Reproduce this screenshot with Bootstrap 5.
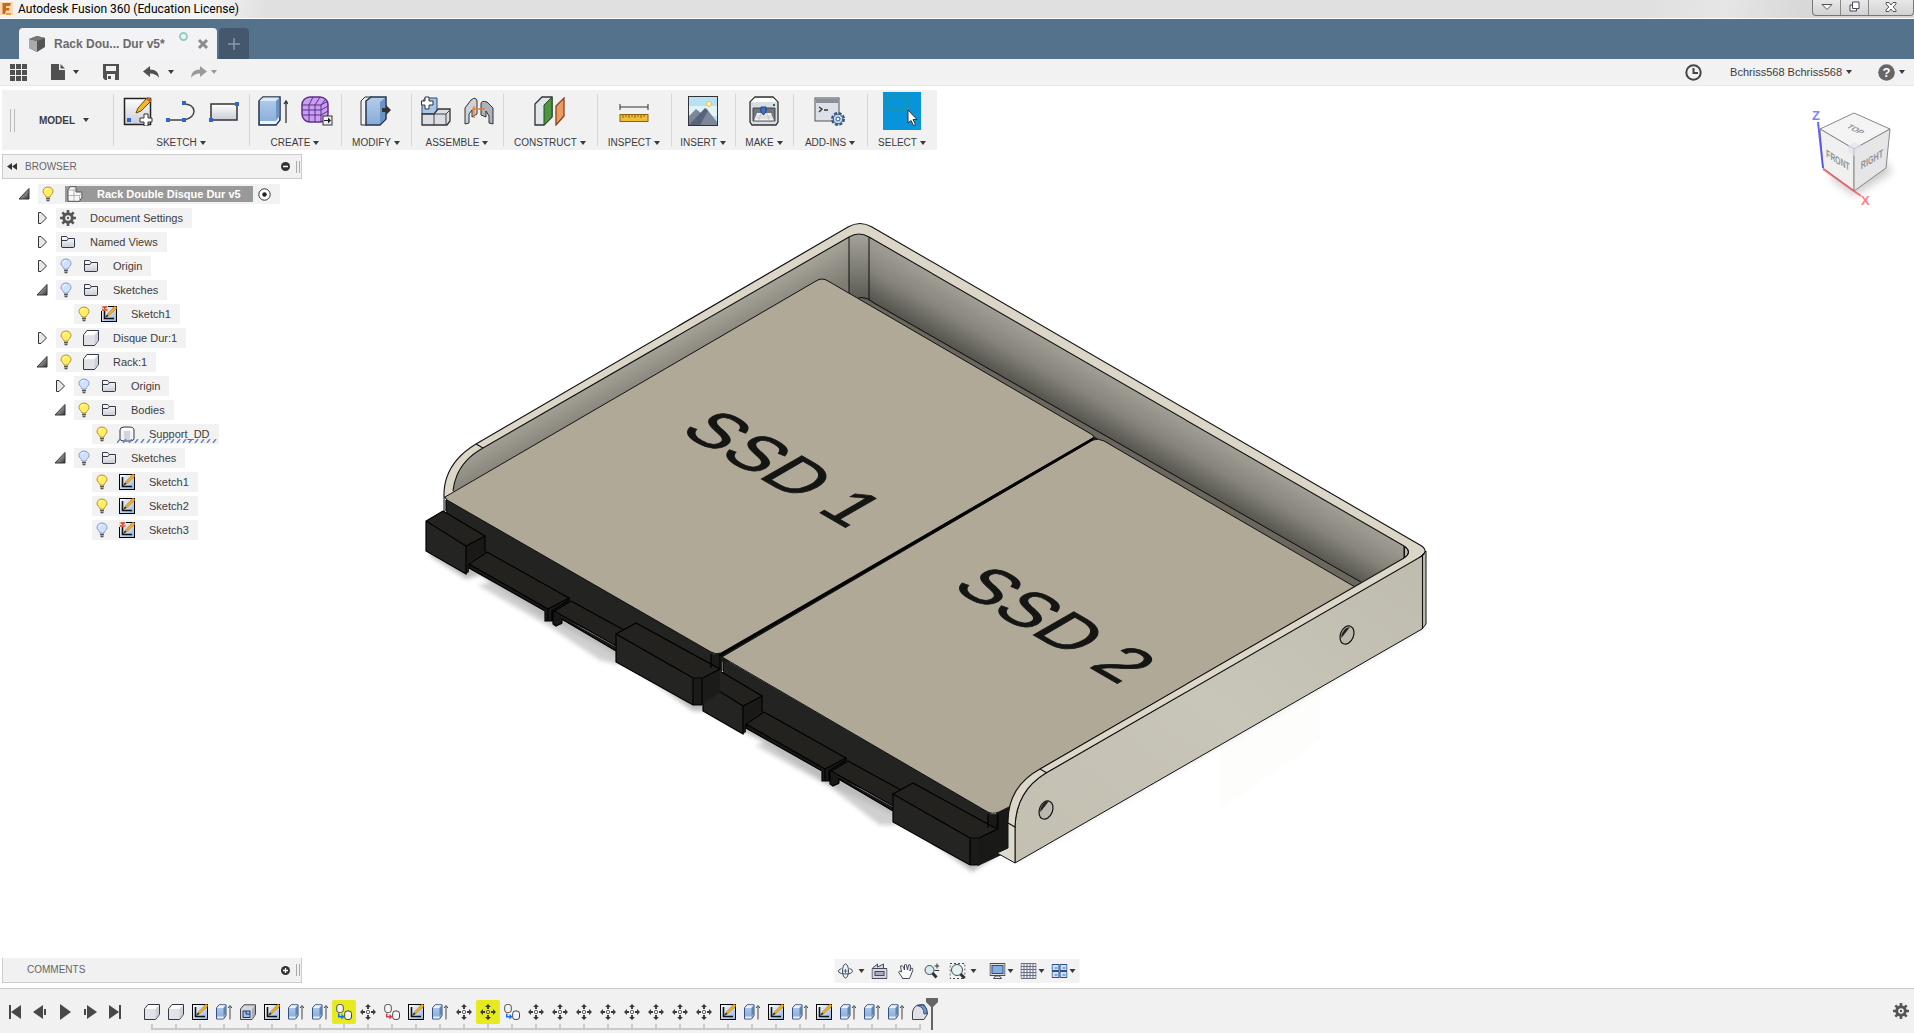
<!DOCTYPE html>
<html lang="en">
<head>
<meta charset="utf-8">
<meta name="viewport" content="width=device-width, initial-scale=1">
<title>Autodesk Fusion 360 (Education License)</title>
<link href="https://cdn.jsdelivr.net/npm/bootstrap@5.3.0/dist/css/bootstrap.min.css" rel="stylesheet">
<style>
body{font:11px/16px "Liberation Sans",Arial,sans-serif;color:#3c3c3c;background:#fff}
svg{display:block;flex:none}
button{border:0;background:none;padding:0;color:inherit;font:inherit;display:flex;align-items:center;justify-content:center}
.titlebar{height:19px;background:linear-gradient(100deg,#f3f3f3 0 11%,#e0e0e0 14% 86%,#e6e6e6 90%,#d8d8d8 94%);border-bottom:1px solid #fff;font:12px/18px Roboto,"Noto Sans",sans-serif;color:#000}
.titlebar h1{font:inherit}
.winbtns{height:16px;border:1px solid #777;border-top:0;border-radius:0 0 4px 4px;background:linear-gradient(#e8e8e8,#d2d2d2);overflow:hidden}
.winbtns button{width:28px;height:15px;border-right:1px solid #888;padding-bottom:2px}
.winbtns button:last-child{width:44px;border:0}
.tabstrip{height:40px;background:#55728c;padding-left:19px;gap:2px}
.doctab{width:198px;height:31px;background:#f3f3f5;border-radius:4px 4px 0 0;font:bold 12px/16px "Liberation Sans",Arial,sans-serif;color:#6a6a6a;padding:0 8px 0 9px}
.addtab{width:30px;height:31px;background:#43586d;border-radius:4px 4px 0 0}
.syncdot{width:9px;height:9px;border:2px solid #8ecfc0;border-radius:50%;margin:0 9px 14px 0}
.quick{height:27px;background:#f2f2f2;border-bottom:1px solid #e8e8e8;padding:0 9px 0 10px}
.helpbtn{margin-left:26px}
.caret{width:0;height:0;border:3px solid transparent;border-top:4px solid #3a3a3a;border-bottom:0;flex:none}
.caret.faint{border-top-color:#999}
.stage{min-height:0}
.model{position:absolute;left:0;top:0;width:100%;height:100%}
.ribbon{margin:4px 0 0 2px;height:60px;background:#f1f1f1;width:max-content;font-size:10px;line-height:15px}
.tgroup{position:relative;padding-top:2px}
.tgroup+.tgroup::before,.workspace::after{content:"";position:absolute;left:0;top:4px;bottom:4px;width:1px;background:#d5d5d5}
.workspace{width:111px;position:relative}
.workspace::after{left:auto;right:-1px}
.ticons{height:38px;gap:13px}
.tlabel{margin:5px auto 0;gap:3px}
.grip{width:5px;height:23px;border:solid #bbb;border-width:0 1px}
.w58{width:58px}.w64{width:64px}.w70{width:70px}.w74{width:74px}.w92{width:92px}.w94{width:94px}.w136{width:136px}
.selbox{width:38px;height:38px;background:#0894da}
.panelhead{width:300px;height:25px;background:#f1f1f1;border:1px solid #ccc;font-size:10px;color:#666;margin-left:2px;padding-left:4px}
.bar2{width:4px;height:12px;border:solid #aaa;border-width:0 1px;margin:0 1px 0 6px}
.tree{margin:5px 0 0;padding:0;list-style:none}
.tree li{height:20px;margin-bottom:4px;display:flex;align-items:center}
.tree .lv0{padding-left:18px}.tree .lv1{padding-left:36px}.tree .lv2{padding-left:54px}.tree .lv3{padding-left:72px}
.slot{width:20px;flex:none;display:flex;justify-content:flex-start}
.node{height:20px;background:#f2f2f2;padding:0 9px 0 4px;gap:11px}
.node .nm{padding-left:3px}
.node .ttl{height:16px;background:#999;color:#fff;font-weight:bold;padding:0 12px 0 2px;gap:14px}
.node .radio{margin-left:-6px}
.node.warn .wv{position:absolute;left:25px;bottom:1px}
.comments{left:0;bottom:5px;border-top:0}
.navbox{left:50%;bottom:5px;transform:translateX(-50%);width:245px;height:24px;background:#f2f2f2;padding:0 3px;gap:7px}
.navbox button{gap:5px}
.navbox .wide{margin-left:3px}
.navbox .split{margin-left:6px}
.navbox .tight{gap:2px}
.cube{right:10px;top:14px}
.timeline{height:45px;background:#f1f1f1;border-top:1px solid #ccc;padding:0 5px 0 7px}
.transport{gap:9px;margin-right:17px;padding-top:15px}
.feat{padding-top:11px}
.feat button{width:24px;height:24px;position:relative}
.feat button.hot{background:#e6ea1e;border-radius:2px}
.feat button::after{content:"";position:absolute;left:11px;top:24px;width:24px;height:6px;border-left:2px solid #c9c9c9;border-bottom:2px solid #c9c9c9}
.feat button:last-of-type::after{width:2px}
.marker{margin-left:-6px;margin-top:-2px}
</style>
</head>
<body>
<svg width="0" height="0" class="position-absolute" aria-hidden="true">
<defs>
<linearGradient id="gw" x1="0" y1="0" x2="0" y2="1"><stop offset="0" stop-color="#fff"/><stop offset="1" stop-color="#c8ccd6"/></linearGradient>
<linearGradient id="gb" x1="0" y1="0" x2="0" y2="1"><stop offset="0" stop-color="#b4cdeb"/><stop offset="1" stop-color="#86abd8"/></linearGradient>
<linearGradient id="gt" x1="0" y1="0" x2="1" y2="1"><stop offset="0" stop-color="#eee"/><stop offset="1" stop-color="#333"/></linearGradient>
<linearGradient id="gs" x1="0" y1="0" x2="1" y2="1"><stop offset="0" stop-color="#fff"/><stop offset="1" stop-color="#8fb4e0"/></linearGradient>
</defs>
<symbol id="open" viewBox="0 0 12 12"><path d="M1 11L11 .500V11Z" fill="url(#gt)" stroke="#333"/></symbol>
<symbol id="shut" viewBox="0 0 12 12"><path d="M2.500 .500V11.500L5 11.500 10.500 6 5 .500Z" fill="#e8e8ea" stroke="#333"/></symbol>
<symbol id="on" viewBox="0 0 12 16"><path d="M6 1C3 1 1 3 1 5.500 1 8 3.500 8.500 4 11H8C8.500 8.500 11 8 11 5.500 11 3 9 1 6 1Z" fill="#ffee66" stroke="#b8952c"/><path d="M3.500 4.500Q4 2.500 6 2.500" fill="none" stroke="#fff"/><path d="M4 12.500H8M4.500 14.500H7.500" stroke="#555" stroke-width="1.500"/></symbol>
<symbol id="off" viewBox="0 0 12 16"><path d="M6 1C3 1 1 3 1 5.500 1 8 3.500 8.500 4 11H8C8.500 8.500 11 8 11 5.500 11 3 9 1 6 1Z" fill="#d0e0ff" stroke="#8a9cc8"/><path d="M3.500 4.500Q4 2.500 6 2.500" fill="none" stroke="#fff"/><path d="M4 12.500H8M4.500 14.500H7.500" stroke="#555" stroke-width="1.500"/></symbol>
<symbol id="folder" viewBox="0 0 16 16"><path d="M1.500 13V2.500H6.500L8 4.500H14.500V13L13.500 13.500H2Z" fill="url(#gw)" stroke="#333846"/><path d="M2 6.500H7L8.500 4.500" fill="none" stroke="#333846"/></symbol>
<symbol id="box" viewBox="0 0 16 16"><path d="M.500 5L4 .500H15.500V10.500L11.500 15.500H.500Z" fill="#e2e3e9" stroke="#333846"/><path d="M1 5L4.500 1H15L11.500 5Z" fill="#fff"/><path d="M11.500 5V15L15 10.500V1.500Z" fill="#cfd1d9"/></symbol>
<symbol id="comp" viewBox="0 0 16 16"><path d="M1 4L3 .700H9V6L14.800 6 15 11 12.500 15.300H1Z" fill="#f8f8fa" stroke="#555"/><path d="M1 4H7L9 1M7 4V15M7 9.500H12.500L15 6.500M12.500 9.500V15M1 9.500H7" fill="none" stroke="#999" stroke-width=".700"/></symbol>
<symbol id="body" viewBox="0 0 16 16"><path d="M1 4Q1 1 5 1H10Q15 1 15 4V13Q15 15 10 15H5Q1 15 1 13Z" fill="#f2f3f6" stroke="#333846"/><path d="M5 5V14H11V5Z" fill="#d2d5de"/><path d="M2 4H14L12 2H4Z" fill="#fff"/></symbol>
<symbol id="sk" viewBox="0 0 16 16"><rect x=".500" y=".500" width="15" height="15" fill="url(#gs)" stroke="#000"/><path d="M3.500 3V12.500H13" fill="none" stroke="#111" stroke-width="1.600"/><path d="M6 10L7 7.500 14 0 16 2 8.500 9Z" fill="#f5b21c" stroke="#b56a10" stroke-width=".600"/><path d="M4 12L6 8.500 7.500 10Z" fill="#222"/></symbol>
<symbol id="skl" viewBox="0 0 16 16"><use href="#sk"/><path d="M0 0H7V5H0Z" fill="#f1d8d0"/><path d="M1.500 1H6M3.700 1V3M1 4H6.500" stroke="#d4421a" stroke-width="1.600"/></symbol>
<symbol id="gear" viewBox="0 0 16 16"><path d="M8 0V16M0 8H16M2.300 2.300L13.700 13.700M13.700 2.300L2.300 13.700" stroke="#555" stroke-width="2.600"/><circle cx="8" cy="8" r="4.300" fill="none" stroke="#555" stroke-width="3"/><circle cx="8" cy="8" r="2.800" fill="#f2f2f2"/><circle cx="8" cy="8" r="1.200" fill="#555"/></symbol>
<symbol id="ex" viewBox="0 0 16 16"><path d="M.500 4L3 .800H10V11.500L7.500 15H.500Z" fill="url(#gb)" stroke="#35517e"/><path d="M1 4L3.300 1.300H9.500L7.500 4Z" fill="#e8f0fa"/><path d="M7.500 4V12L9.500 9.500V1.500Z" fill="#5d82b4"/><path d="M1 12.500H7.500V14.500H1Z" fill="#e8ebf2"/><path d="M14 15.500V2M12 4L14 1.500 16 4" fill="none" stroke="#444"/></symbol>
<symbol id="shell" viewBox="0 0 16 16"><path d="M.500 5L4 .800H15.500V10.500L12 15.500H.500Z" fill="#d4d7df" stroke="#444"/><path d="M12 5V15L15 10.500V1.500Z" fill="#a7abb6"/><rect x="3" y="7" width="7" height="6.500" fill="#9fc0ea" stroke="#223a66"/><path d="M6 7V10H10" fill="none" stroke="#223a66"/></symbol>
<symbol id="mv" viewBox="0 0 16 16"><path d="M8 0L11 3H9V5H7V3H5ZM8 16L5 13H7V11H9V13H11ZM0 8L3 5V7H5V9H3V11ZM16 8L13 11V9H11V7H13V5Z" fill="currentColor"/><rect x="6.500" y="6.500" width="3" height="3" rx="1" fill="none" stroke="currentColor"/></symbol>
<symbol id="copy" viewBox="0 0 16 16"><rect x=".700" y=".500" width="6.600" height="8" rx="2.500" fill="#f4f4f4" stroke="#555"/><rect x="8.700" y="7" width="6.800" height="8.500" rx="2.500" fill="#f4f4f4" stroke="#444"/><path d="M2 9.500H3.500V12H5.500V10L8.500 12.800 5.500 15.600V13.500H2Z" fill="currentColor"/></symbol>
<symbol id="fillet" viewBox="0 0 16 16"><path d="M.500 15.500V8Q2 1 8 .700H12Q15.500 5 15.500 10L12 15.500Z" fill="#dfe1e6" stroke="#444"/><path d="M5 1.500Q12 2.500 12 10L15 9.500Q15 3 11 1Z" fill="#6f9bd2" stroke="#35517e"/></symbol>
</svg>

<div class="d-flex flex-column vh-100 overflow-hidden">
<header class="titlebar d-flex align-items-start">
  <svg width="14" height="17" viewBox="0 0 14 17"><path d="M0 2H13V15H0Z" fill="#fbd9b5"/><path d="M2.500 3H11L10 6H6V8H9.500L9 10.500H6L5 14H2.500Z" fill="#c66a1c"/><path d="M6 13H11V15H6Z" fill="#f29a3e"/></svg>
  <h1 class="m-0 ms-1">Autodesk Fusion 360 (Education License)</h1>
  <div class="winbtns d-flex ms-auto">
    <button aria-label="Minimize"><svg width="12" height="8"><path d="M1 1.500H11L6 6.500Z" fill="#fff" stroke="#555"/></svg></button>
    <button aria-label="Restore"><svg width="11" height="11"><path d="M3.500 1H10V7.500H7.500V10H1V4H3.500Z" fill="#fff" stroke="#445"/><path d="M3.500 4V7.500H7.500" fill="none" stroke="#445"/></svg></button>
    <button aria-label="Close"><svg width="12" height="10"><path d="M1 .500H4L6 3 8 .500H11V2L8.200 5 11 8V9.500H8L6 7 4 9.500H1V8L3.800 5 1 2Z" fill="#fff" stroke="#555"/></svg></button>
  </div>
</header>
<nav class="tabstrip d-flex align-items-end">
  <div class="doctab d-flex align-items-center">
    <svg width="18" height="18" viewBox="0 0 18 18"><path d="M1 4L9 1 17 3V12L9 17 1 13Z" fill="#555"/><path d="M1 4L9 6V17L1 13Z" fill="#aaa"/><path d="M1 4L9 1 17 3 9 6Z" fill="#777"/></svg>
    <a href="#" class="text-reset text-decoration-none ms-2 me-auto">Rack Dou... Dur v5*</a>
    <span class="syncdot"></span>
    <button aria-label="Close tab"><svg width="12" height="12"><path d="M2 2L10 10M10 2L2 10" stroke="#8b8b8b" stroke-width="3"/></svg></button>
  </div>
  <button class="addtab" aria-label="New tab"><svg width="12" height="12"><path d="M6 0V12M0 6H12" stroke="#8997a5" stroke-width="1.500"/></svg></button>
</nav>
<div class="quick d-flex align-items-center">
  <button aria-label="Data panel"><svg width="17" height="17"><path d="M0 0H5V5H0ZM6 0H11V5H6ZM12 0H17V5H12ZM0 6H5V11H0ZM6 6H11V11H6ZM12 6H17V11H12ZM0 12H5V17H0ZM6 12H11V17H6ZM12 12H17V17H12Z" fill="#505050"/></svg></button>
  <button aria-label="File" class="ms-4 gap-2"><svg width="14" height="16"><path d="M0 0H8V6H14V16H0Z" fill="#505050"/><path d="M9.500 0L14 4.500H9.500Z" fill="#505050"/></svg><i class="caret"></i></button>
  <button aria-label="Save" class="ms-4"><svg width="16" height="16"><path d="M0 0H16V16H2L0 14Z" fill="#505050"/><path d="M3 2H13V7H3ZM4 10H12V16H4Z" fill="#f2f2f2"/><path d="M5 12H8V15H5Z" fill="#505050"/></svg></button>
  <button aria-label="Undo" class="ms-4 gap-2"><svg width="17" height="13"><path d="M0 5.500L7 0V3.500Q16 3.500 16 12 13 7.500 7 7.500V11Z" fill="#505050"/></svg><i class="caret"></i></button>
  <button aria-label="Redo" class="ms-3 gap-1"><svg width="17" height="13"><path d="M17 5.500L10 0V3.500Q1 3.500 1 12 4 7.500 10 7.500V11Z" fill="#9a9a9a"/></svg><i class="caret faint"></i></button>
  <button aria-label="Job status" class="ms-auto"><svg width="17" height="17"><circle cx="8.500" cy="8.500" r="7.200" fill="none" stroke="#444" stroke-width="2"/><path d="M8.500 4V9H13" fill="none" stroke="#444" stroke-width="2"/></svg></button>
  <button class="gap-1 ms-4 ps-1">Bchriss568 Bchriss568 <i class="caret"></i></button>
  <button aria-label="Help" class="helpbtn gap-1"><svg width="17" height="17"><circle cx="8.500" cy="8.500" r="8.300" fill="#666"/><text x="8.500" y="13" text-anchor="middle" font-size="13" font-weight="bold" fill="#fff">?</text></svg><i class="caret"></i></button>
</div>

<main class="stage position-relative flex-grow-1 d-flex flex-column align-items-start">
<svg class="model" viewBox="0 86 1914 902" role="img" aria-label="Rack with two SSD drives">
  <defs>
    <linearGradient id="wallR" gradientUnits="userSpaceOnUse" x1="1130" y1="389" x2="1093" y2="453"><stop offset="0" stop-color="#a09e94"/><stop offset=".35" stop-color="#86847b"/><stop offset=".8" stop-color="#4b4a43"/><stop offset="1" stop-color="#45443d"/></linearGradient>
    <linearGradient id="wallL" gradientUnits="userSpaceOnUse" x1="650" y1="351" x2="668" y2="383"><stop offset="0" stop-color="#a4a297"/><stop offset="1" stop-color="#7d7b72"/></linearGradient>
    <linearGradient id="corner" x1="0" y1="0" x2="0" y2="1"><stop offset="0" stop-color="#a5a398"/><stop offset="1" stop-color="#55544d"/></linearGradient>
    <linearGradient id="side" x1="0" y1="1" x2="1" y2="0"><stop offset="0" stop-color="#c3bfb1"/><stop offset=".5" stop-color="#c8c5b9"/><stop offset="1" stop-color="#bfbcaf"/></linearGradient>
    <linearGradient id="plate" x1="0" y1="0" x2="1" y2="1"><stop offset="0" stop-color="#a8a090"/><stop offset=".3" stop-color="#b0a998"/><stop offset=".7" stop-color="#b0a998"/><stop offset="1" stop-color="#a69e8d"/></linearGradient>
    <filter id="soft" x="-10%" y="-10%" width="120%" height="120%"><feGaussianBlur stdDeviation="2"/></filter>
    <g id="front">
      <path d="M446 498L715 654H722V672L700 682 548 612 466 567 446 520Z" fill="#232422"/>
      <path d="M711 655V668L716 672 720 668V655" fill="#1a1b19"/>
      <path d="M469 564L487 552 569 598 548 609ZM554 611L571 601 636 637 616 646Z" fill="#24221e"/>
      <path d="M469 564L548 609V621H545V611L469 568ZM548 609L569 598V602L552 611V621H548ZM553 612L616 647V651L562 620V624L556 626 553 624Z" fill="#181917"/>
      <path d="M426 521L443 511 485 536 466 546Z" fill="#24221e"/><path d="M426 521V551L466 574V546Z" fill="#242523"/><path d="M466 546L485 536V552L469 562V572L466 574Z" fill="#1a1917"/>
      <path d="M616 634L636 623 720 669 703 678H693Z" fill="#24221e"/><path d="M616 634V662L693 705V678Z" fill="#242523"/><path d="M693 678H703L720 669V692L702 705H693Z" fill="#1b1c1a"/>
      <path d="M446 500V511M711 654V668M720 656V669M443 511L426 521V551L466 574V546L485 536 443 511M426 521L466 546M485 536V552M487 552L569 598M469 564L548 609M487 552L469 564V568L545 611V621H552V611L569 600V597M548 609V621M571 601L624 630M554 611L616 646M571 601L553 612V624L556 626 562 623V619L616 651M616 634L636 623 720 669 703 678H693L616 634V662L693 705H702M693 678V705M702 678V705M548 609L569 598" fill="none" stroke="#000" stroke-width="1.200"/>
    </g>
  </defs>
  <path d="M1220 730L1320 680V740L1220 810Z" fill="#fdfdfc"/>
  <g fill="#bbb" filter="url(#soft)"><path d="M430 556L466 579 480 575 545 618 570 630 616 655 693 711 705 711 760 740 830 785 895 815 972 872 998 855 700 680 430 535Z"/><path d="M478 585L550 627 600 660 620 665V640L500 580ZM755 745L830 787 880 825 897 825V800L780 740Z" opacity=".7"/><path d="M1018 862L1426 628V620L1018 850Z" opacity=".4"/></g>
  <path d="M444 496Q443 464 476 444L848 227Q860 220 872 227L1420 545Q1428 550 1424 556L1046 773Q1016 791 1015 827L1010 807Q1014 783 1040 769L700 600 444 512Z" fill="#dbd6c8"/>
  <path d="M444 497V512L449 514V500Z" fill="#e6e3da" stroke="#111"/>
  <path d="M453 492Q456 463 483 448L849 237V303L822 279Z" fill="url(#wallL)"/>
  <path d="M849 237Q859 231 869 237V305H849Z" fill="url(#corner)"/>
  <path d="M869 237L1404 546V558L1360 583 869 302Z" fill="url(#wallR)"/>
  <path d="M1404 546Q1413 552 1404 558Z" fill="#bdbab0" stroke="#111"/>
  <path d="M849 294L869 301 1361 583 1355 587 1090 442Z" fill="#69675e"/>
  <path d="M849 237V294M869 237V300M858 298Q866 296 874 303L1361 582" fill="none" stroke="#111" stroke-width="1"/>
  <use href="#front" x="277" y="160"/><use href="#front"/>
  <path d="M996 813L1012 805V850L978 866V838L997 828Z" fill="#191918"/><path d="M998 814V829L979 838" fill="none" stroke="#000"/>
  <path d="M715 652L1091 434 1098 439 724 664Z" fill="#1b1b19"/>
  <path d="M445 497L816 281Q822 277 828 281L1091 434Q1096 437 1091 439L721 653Q716 655 711 652L447 500Z" fill="url(#plate)" stroke="#111"/>
  <path d="M722 657L1093 440Q1098 438 1104 441L1355 587 1040 769Q1018 781 1011 806L999 812Q992 815 986 811Z" fill="url(#plate)" stroke="#111"/>
  <path d="M719 656L1093 439" stroke="#000" stroke-width="2.500"/>
  <path d="M1015 863V827Q1016 791 1046 773L1420 557 1426 551V624L1422 629Z" fill="url(#side)" stroke="#111"/>
  <path d="M1008 821L1015 827V863L997 853 1008 848Z" fill="#dcd9ce" stroke="#111"/>
  <path d="M1008 824Q1007 787 1040 769L1404 558 1422 557 1046 773Q1016 791 1015 827Z" fill="#dcd7c8"/>
  <path d="M1008 824Q1007 787 1040 769L1404 558Q1413 552 1404 546L869 237Q859 231 849 237L483 448Q456 463 453 491M444 497Q443 464 476 444L848 227Q860 220 872 227L1420 545Q1429 550 1422 556L1046 773Q1016 791 1015 827L1008 823M1040 769L1047 773M476 444L483 448M1422.500 556V629M1404.500 546V558" fill="none" stroke="#111" stroke-width="1.100"/>
  <g stroke="#111" stroke-width="1.200"><ellipse cx="1347" cy="635" rx="6.500" ry="9.500" transform="rotate(22 1347 635)" fill="#bbb8ad"/><ellipse cx="1046" cy="810" rx="6.500" ry="9.500" transform="rotate(22 1046 810)" fill="#bbb8ad"/></g>
  <path d="M1341 638Q1342 628 1350 627L1343 636ZM1040 812Q1041 802 1049 801L1042 810Z" fill="#222"/>
  <g font-size="68" fill="#151614" stroke="#151614" stroke-width="1"><text transform="matrix(.866 .5 -.866 .5 678 431)">SSD 1</text><text transform="matrix(.866 .5 -.866 .5 950 587)">SSD 2</text></g>
</svg>

<div class="ribbon position-relative d-flex">
  <div class="workspace d-flex align-items-center ps-2"><span class="grip"></span><button class="fw-bold gap-2 ms-4">MODEL <i class="caret"></i></button></div>
  <div class="tgroup w136"><div class="ticons d-flex align-items-center justify-content-center">
    <button aria-label="Create sketch"><svg width="30" height="30"><rect x="1.500" y="2.500" width="26" height="26" fill="url(#gw)" stroke="#222" stroke-width="1.500"/><rect x="4" y="22" width="4" height="4" fill="#2f66c8"/><path d="M13 17L15 12 24 2 28 5 18 15Z" fill="#f5b82a" stroke="#6b4a12"/><path d="M24 2L28 5" stroke="#b5623a" stroke-width="3"/><path d="M21 18H25V22H29V26H25V30H21V26H17V22H21Z" fill="#fff" stroke="#333"/></svg></button>
    <button aria-label="Line"><svg width="30" height="30"><path d="M2 24H18Q28 22 28 15 27 8 18 8" fill="none" stroke="#444" stroke-width="1.500"/><path d="M0 22H4V26H0ZM16 22H20V26H16ZM16 5H20V9H16Z" fill="#2f66c8"/></svg></button>
    <button aria-label="Rectangle"><svg width="30" height="30"><rect x="2" y="8" width="26" height="16" fill="url(#gw)" stroke="#333" stroke-width="1.500"/><path d="M0 22H4V26H0ZM26 6H30V10H26Z" fill="#2f66c8"/></svg></button></div><button class="tlabel">SKETCH <i class="caret"></i></button></div>
  <div class="tgroup w92"><div class="ticons d-flex align-items-center justify-content-center">
    <button aria-label="Extrude"><svg width="30" height="30"><path d="M1 5L5 1H22V24L18 29H1Z" fill="url(#gb)" stroke="#24344e" stroke-width="1.500"/><path d="M1.500 5L5 1.500H21L18 5Z" fill="#dce9f7"/><path d="M18 5V24L21.500 20V2Z" fill="#6b93c4"/><path d="M2 25H18L21 21V24L18 28H2Z" fill="#f2f4f8"/><path d="M28 27V6M26 8L28 5 30 8" stroke="#333" stroke-width="1.300" fill="none"/></svg></button>
    <button aria-label="Create form"><svg width="32" height="30"><rect x="1" y="1" width="26" height="25" rx="8" fill="#c9a0ee" stroke="#5c2f90" stroke-width="1.500"/><path d="M1 9H20L27 5M1 14H20L27 10M1 19H20L27 15M8 9V26M14 9V26M20 9V26M8 9L12 1M14 9L19 1M20 9L24 4" fill="none" stroke="#5c2f90"/><rect x="22" y="20" width="9" height="9" fill="#eee" stroke="#333"/><path d="M23 24H27V21.500L30 24.500 27 27.500V25H23Z" fill="#222"/></svg></button></div><button class="tlabel">CREATE <i class="caret"></i></button></div>
  <div class="tgroup w70"><div class="ticons d-flex align-items-center justify-content-center"><button aria-label="Press pull"><svg width="32" height="30"><path d="M1 5L5 1H12L7 5V29H1Z" fill="#eef0f4" stroke="#333"/><path d="M6 5L11 1H26V23L20 29H6Z" fill="url(#gb)" stroke="#24344e" stroke-width="1.500"/><path d="M20 6V28L25 23V2Z" fill="#6b93c4"/><path d="M22 12H26V9L31 14 26 19V16H22Z" fill="#333"/></svg></button></div><button class="tlabel">MODIFY <i class="caret"></i></button></div>
  <div class="tgroup w92"><div class="ticons d-flex align-items-center justify-content-center">
    <button aria-label="New component"><svg width="30" height="30"><path d="M1 6L4 2H16V18H1Z" fill="#a6c6ec" stroke="#2b4a7a"/><path d="M1 18H13L17 13H29V25L26 29H1Z" fill="#dcdee5" stroke="#333" stroke-width="1.300"/><path d="M13 18H25V29M13 18V29M25 18L29 14" fill="none" stroke="#444"/><path d="M4 1H8V5H12V9H8V13H4V9H.500V5H4Z" fill="#fff" stroke="#333"/></svg></button>
    <button aria-label="Joint"><svg width="30" height="30"><path d="M1 12L7 4Q12 0 13 5V18L8 21V14L5 18V27L1 28Z" fill="#d0d2da" stroke="#333"/><path d="M29 12L23 6Q17 4 17 8V19L22 21V15L25 20V27L29 28Z" fill="#aeb2be" stroke="#333"/><path d="M8 13H21M10 10V22" stroke="#e8802e" stroke-width="1.300"/></svg></button></div><button class="tlabel">ASSEMBLE <i class="caret"></i></button></div>
  <div class="tgroup w94"><div class="ticons d-flex align-items-center justify-content-center"><button aria-label="Offset plane"><svg width="32" height="30"><path d="M1 8L8 1H18V21L10 29H1Z" fill="#e2e5ea" stroke="#333" stroke-width="1.300"/><path d="M10 9L18 1V21L10 29Z" fill="#4f9440" stroke="#234b1c"/><path d="M22 10L30 2V20L22 29Z" fill="#ec9a66" stroke="#8a4217" stroke-width="1.300"/></svg></button></div><button class="tlabel">CONSTRUCT <i class="caret"></i></button></div>
  <div class="tgroup w74"><div class="ticons d-flex align-items-center justify-content-center"><button aria-label="Measure"><svg width="30" height="30"><path d="M1 8V14M29 8V14M1 11H29" stroke="#333"/><rect x="1" y="18.500" width="28" height="7" fill="#f0bd35" stroke="#8a6312"/><path d="M4 19V22M7 19V21M10 19V22M13 19V21M16 19V22M19 19V21M22 19V22M25 19V21" stroke="#8a6312"/></svg></button></div><button class="tlabel">INSPECT <i class="caret"></i></button></div>
  <div class="tgroup w64"><div class="ticons d-flex align-items-center justify-content-center"><button aria-label="Insert image"><svg width="30" height="30"><rect x=".500" y=".500" width="29" height="29" fill="#b8e2f2" stroke="#333"/><rect x="1" y="10" width="28" height="10" fill="#dff3f8"/><path d="M1 20L8 13 13 17 18 12 29 26V29H1Z" fill="#7c8799"/><path d="M1 29L17 12 20 15 12 29Z" fill="#59647a"/><circle cx="21" cy="8" r="2.500" fill="#fff7c0" stroke="#edc04b"/></svg></button></div><button class="tlabel">INSERT <i class="caret"></i></button></div>
  <div class="tgroup w58"><div class="ticons d-flex align-items-center justify-content-center"><button aria-label="3D print"><svg width="30" height="30"><path d="M1 6L6 1H24L29 6V26L27 29H3L1 26Z" fill="#dadde3" stroke="#333" stroke-width="1.300"/><path d="M2 6L6 2H24L28 6Z" fill="#fff"/><rect x="24" y="8" width="2" height="2" fill="#197a1b"/><path d="M4 12H26V25H4Z" fill="#70757e" stroke="#444"/><path d="M8 17H22L25 24.500H5Z" fill="#f2f2f2"/><path d="M8 20H23M7 22H24M12 17L10 24M18 17L20 24" stroke="#bbb" stroke-width=".700"/><path d="M12 11H17V16L14.500 19 12 16Z" fill="#3a74d0" stroke="#1c3f80"/></svg></button></div><button class="tlabel">MAKE <i class="caret"></i></button></div>
  <div class="tgroup w74"><div class="ticons d-flex align-items-center justify-content-center"><button aria-label="Scripts"><svg width="32" height="30"><rect x="1" y="2" width="24" height="23" fill="#dde0e6" stroke="#555"/><rect x="2" y="3" width="22" height="4" fill="#8a8e98"/><path d="M5 11L8 13 5 16M10 14H14" fill="none" stroke="#333" stroke-width="1.300"/><g stroke="#34557f" fill="#c4d8ef"><circle cx="24" cy="23" r="6" stroke-width="2" stroke-dasharray="3 1.700"/><circle cx="24" cy="23" r="4.800"/><circle cx="24" cy="23" r="2" fill="#fff"/></g></svg></button></div><button class="tlabel">ADD-INS <i class="caret"></i></button></div>
  <div class="tgroup w70"><div class="ticons d-flex align-items-center justify-content-center"><button class="selbox" aria-label="Select"><svg width="38" height="38"><rect x="4.500" y="3.500" width="20" height="14" fill="none" stroke="#41982c" stroke-width="1.300"/><path d="M25 18V31L28 28.500 30.500 33.500 32.500 32.500 30 27.500H34Z" fill="#fff" stroke="#333"/></svg></button></div><button class="tlabel">SELECT <i class="caret"></i></button></div>
</div>

<section class="position-relative mt-1">
  <div class="panelhead d-flex align-items-center">
    <button aria-label="Collapse"><svg width="10" height="7"><path d="M5 0V7L0 3.500ZM10 0V7L5 3.500Z" fill="#333"/></svg></button>
    <span class="ms-2 me-auto ">BROWSER</span>
    <button aria-label="Hide"><svg width="9" height="9"><circle cx="4.500" cy="4.500" r="4.500" fill="#333"/><path d="M2 4.500H7" stroke="#fff" stroke-width="1.500"/></svg></button><span class="bar2"></span>
  </div>
  <ul class="tree" id="tree"></ul>
</section>

<svg class="cube position-absolute" width="110" height="110" viewBox="1794 100 110 110">
  <defs><filter id="cs"><feGaussianBlur stdDeviation="4"/></filter></defs>
  <path d="M1828 176L1854 196 1892 172 1884 160Z" fill="#999" opacity=".5" filter="url(#cs)"/>
  <path d="M1854 113L1890 129 1854 149 1820 129Z" fill="#f4f4f4" stroke="#888"/><path d="M1820 129L1854 149V191L1823 168Z" fill="#f0f0f1" stroke="#888"/><path d="M1890 129L1854 149V191L1886 168Z" fill="#e6e6e8" stroke="#888"/>
  <path d="M1848 146L1854 142 1861 145V151L1854 156 1848 152Z" fill="#dfe2ea" opacity=".7"/>
  <g font-weight="bold" fill="#8d9299" font-size="9" text-anchor="middle"><text transform="matrix(.8 .4 -.8 .5 1853 131)">TOP</text><text transform="matrix(.76 .46 .04 1.200 1838 164)">FRONT</text><text transform="matrix(.8 -.46 0 1.200 1872 163)">RIGHT</text></g>
  <path d="M1818 122L1823 168" stroke="#4040f0" stroke-width="2" opacity=".8"/><path d="M1823 169L1861 196" stroke="#f05050" stroke-width="2" opacity=".75"/>
  <text x="1812" y="120" font-size="13" fill="#8080ff" font-weight="bold">Z</text><text x="1861" y="205" font-size="13" fill="#ff8080" font-weight="bold">X</text>
</svg>

<div class="panelhead comments position-absolute d-flex align-items-center">
  <span class="ms-3 ps-1 me-auto ">COMMENTS</span>
  <button aria-label="Add comment"><svg width="9" height="9"><circle cx="4.500" cy="4.500" r="4.500" fill="#333"/><path d="M2 4.500H7M4.500 2V7" stroke="#fff" stroke-width="1.300"/></svg></button><span class="bar2"></span>
</div>

<div class="navbox position-absolute d-flex align-items-center">
  <button aria-label="Orbit"><svg width="16" height="16"><ellipse cx="8" cy="8" rx="3" ry="7" fill="none" stroke="#444b58"/><path d="M4 5.500Q0 7 1 9 3 11 8 11 14 11 15 8.500 15 6 12 5.500" fill="none" stroke="#444b58"/><path d="M8 6V10M6 8H10" stroke="#1d72d8"/></svg><i class="caret"></i></button>
  <button aria-label="Look at"><svg width="16" height="16"><path d="M1 5L6 1V4L12 1V5M.500 5.500H15.500V15.500H.500Z" fill="#d5d7dc" stroke="#444b58"/><rect x="3.500" y="8.500" width="9" height="4" fill="#aab" stroke="#444b58"/></svg></button>
  <button aria-label="Pan" class="wide"><svg width="16" height="16"><path d="M5 15L1 9Q2 7 4 9L3 3Q5 2 6 4L7 7V2Q8 0 9 2L10 7 11 2Q13 1 13 3L12.500 8 14 5Q16 5 15.500 7L13 13 12 15.500H5Z" fill="#fafafa" stroke="#444b58"/></svg></button>
  <button aria-label="Zoom" class="wide"><svg width="16" height="16"><circle cx="6" cy="7" r="4.500" fill="#d8eaf0" stroke="#444b58"/><path d="M9 10L13 14.500" stroke="#333" stroke-width="3"/><path d="M11 3H16M13.500 .500V5.500M11 7.500H16" stroke="#333"/></svg></button>
  <button aria-label="Fit" class="wide"><svg width="16" height="16"><rect x=".500" y=".500" width="15" height="15" fill="none" stroke="#444" stroke-dasharray="2 2"/><circle cx="7.500" cy="7" r="5.500" fill="#e3f1f3" stroke="#444b58"/><path d="M11 11L15 15" stroke="#333" stroke-width="3"/></svg><i class="caret"></i></button>
  <button aria-label="Display" class="tight split"><svg width="16" height="16"><rect x=".500" y=".500" width="15" height="12" fill="#ddd" stroke="#444b58"/><rect x="2.500" y="2.500" width="11" height="8" fill="#85aee0" stroke="#2c4f86"/><path d="M4 15.500H12L10 13H6Z" fill="#eee" stroke="#444b58"/></svg><i class="caret"></i></button>
  <button aria-label="Grid" class="tight"><svg width="16" height="16"><path d="M.500 .500H15.500V15.500H.500ZM3.500 0V16M6.500 0V16M9.500 0V16M12.500 0V16M0 3.500H16M0 6.500H16M0 9.500H16M0 12.500H16" fill="#eef" stroke="#6a707c"/></svg><i class="caret"></i></button>
  <button aria-label="Viewports" class="tight"><svg width="16" height="14"><path d="M.500 .500H7.500V6.500H.500ZM8.500 .500H15.500V6.500H8.500ZM.500 7.500H7.500V13.500H.500ZM8.500 7.500H15.500V13.500H8.500Z" fill="#cfe0f5" stroke="#2c4f86"/><path d="M3 3H6V5H3ZM11 3H14V5H11ZM3 10H6V12H3ZM11 10H14V12H11Z" fill="#7da6da"/></svg><i class="caret"></i></button>
</div>
</main>

<footer class="timeline d-flex align-items-start">
  <div class="transport d-flex align-items-center">
    <button aria-label="Start"><svg width="16" height="16"><path d="M2 1H4V15H2ZM14 1V15L4 8Z" fill="#484848"/></svg></button>
    <button aria-label="Step back"><svg width="16" height="16"><path d="M11 1V15L1 8ZM12 5H14V11H12Z" fill="#484848"/></svg></button>
    <button aria-label="Play"><svg width="16" height="16"><path d="M3 0V16L14 8Z" fill="#484848"/></svg></button>
    <button aria-label="Step forward"><svg width="16" height="16"><path d="M5 1V15L15 8ZM2 5H4V11H2Z" fill="#484848"/></svg></button>
    <button aria-label="End"><svg width="16" height="16"><path d="M12 1H14V15H12ZM2 1V15L12 8Z" fill="#484848"/></svg></button>
  </div>
  <div class="feat d-flex" id="feat"><svg class="marker" width="12" height="32"><path d="M0 0H12V4L7 9V32H5V9L0 4Z" fill="#666"/></svg></div>
  <button aria-label="Timeline settings" class="ms-auto align-self-center"><svg width="16" height="16"><use href="#gear"/></svg></button>
</footer>
</div>
<script>
const ico = (id, w = 16) => `<svg width="${w}" height="${w === 12 && (id === 'on' || id === 'off') ? 16 : w}"><use href="#${id}"/></svg>`;
// level, arrow, bulb, icon, name
const rows = [
  [0,'open','on','comp','Rack Double Disque Dur v5'],
  [1,'shut','','gear','Document Settings'],
  [1,'shut','','folder','Named Views'],
  [1,'shut','off','folder','Origin'],
  [1,'open','off','folder','Sketches'],
  [2,'','on','skl','Sketch1'],
  [1,'shut','on','box','Disque Dur:1'],
  [1,'open','on','box','Rack:1'],
  [2,'shut','off','folder','Origin'],
  [2,'open','on','folder','Bodies'],
  [3,'','on','body','Support_DD'],
  [2,'open','off','folder','Sketches'],
  [3,'','on','sk','Sketch1'],
  [3,'','on','sk','Sketch2'],
  [3,'','off','skl','Sketch3']
];
document.getElementById('tree').innerHTML = rows.map(([lv, arrow, bulb, icon, name]) => {
  const b = bulb ? `<button aria-label="Toggle visibility">${ico(bulb, 12)}</button>` : '';
  const label = lv === 0
    ? `<span class="ttl d-flex align-items-center">${ico(icon)}<span>${name}</span></span><svg class="radio" width="13" height="13"><circle cx="6.500" cy="6.500" r="5.700" fill="#fff" stroke="#333"/><circle cx="6.500" cy="6.500" r="2.200" fill="#222"/></svg>`
    : `${ico(icon)}<span class="nm">${name}</span>`;
  const wave = icon === 'body' ? '<svg class="wv" width="102" height="4"><path d="M0 4L3 0M6 4L9 0M12 4L15 0M18 4L21 0M24 4L27 0M30 4L33 0M36 4L39 0M42 4L45 0M48 4L51 0M54 4L57 0M60 4L63 0M66 4L69 0M72 4L75 0M78 4L81 0M84 4L87 0M90 4L93 0M96 4L99 0" stroke="#6b88b4" stroke-width="1.500"/></svg>' : '';
  return `<li class="lv${lv}"><span class="slot">${arrow ? `<button aria-label="Expand">${ico(arrow, 12)}</button>` : ''}</span><div class="node d-flex align-items-center position-relative${wave ? ' warn' : ''}">${b}${label}${wave}</div></li>`;
}).join('');

const feats = 'box box sk ex shell sk ex ex copy* mv copyr sk ex mv mv* copy mv mv mv mv mv mv mv mv sk ex sk ex sk ex ex ex fillet'.split(' ');
document.getElementById('feat').insertAdjacentHTML('afterbegin', feats.map(f => {
  const hot = f.endsWith('*'), red = f === 'copyr', id = f.replace('*', '').replace('copyr', 'copy');
  const tone = id === 'copy' ? (red ? 'text-danger' : 'text-primary') : '';
  return `<button class="${hot ? 'hot ' : ''}${tone}" aria-label="${id}">${ico(id)}</button>`;
}).join(''));
</script>
<script src="https://cdn.jsdelivr.net/npm/bootstrap@5.3.0/dist/js/bootstrap.bundle.min.js"></script>
</body>
</html>
